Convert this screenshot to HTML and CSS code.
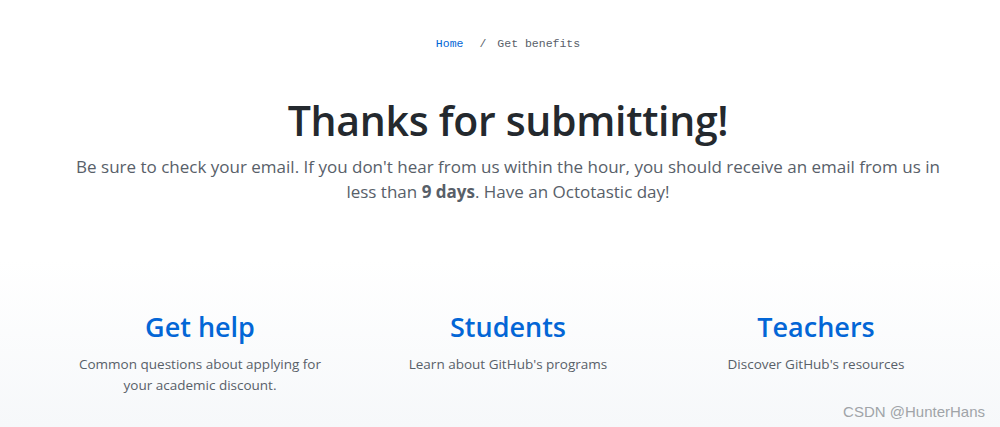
FILE: index.html
```html
<!DOCTYPE html>
<html lang="en">
<head>
<meta charset="utf-8">
<title>Thanks for submitting</title>
<link rel="stylesheet" href="styles.css">
</head>
<body>
<main class="page">
  <nav class="crumbs">
    <a class="crumb-link" href="#">Home</a>
    <span class="crumb-sep">/</span>
    <span class="crumb-current">Get benefits</span>
  </nav>
  <section class="hero">
    <h1 class="hero-title">Thanks for submitting!</h1>
    <p class="hero-text">Be sure to check your email. If you don't hear from us within the hour, you should receive an email from us in less than <strong>9 days</strong>. Have an Octotastic day!</p>
  </section>
  <section class="links">
    <div class="links-grid">
      <div class="link-col">
        <a class="link-title" href="#">Get help</a>
        <p class="link-text">Common questions about applying for your academic discount.</p>
      </div>
      <div class="link-col">
        <a class="link-title" href="#">Students</a>
        <p class="link-text">Learn about GitHub's programs</p>
      </div>
      <div class="link-col">
        <a class="link-title" href="#">Teachers</a>
        <p class="link-text">Discover GitHub's resources</p>
      </div>
    </div>
  </section>
</main>
<div class="watermark">CSDN @HunterHans</div>
</body>
</html>
```
FILE: styles.css
```css
* { box-sizing: border-box; }
html, body { margin: 0; padding: 0; }
body {
  background: #fff;
  font-family: "Open Sans", "Noto Sans", sans-serif;
  color: #24292e;
  height: 427px;
  overflow: hidden;
  position: relative;
}
.page {
  display: flex;
  flex-direction: column;
  min-height: 427px;
}
.crumbs {
  display: flex;
  justify-content: center;
  align-items: center;
  padding: 36px 0 0 16px;
  font-family: "Liberation Mono", "DejaVu Sans Mono", monospace;
  font-size: 11.5px;
  line-height: 16px;
}
.crumb-link { color: #0366d6; text-decoration: none; }
.crumb-sep { color: #586069; margin: 0 11px 0 16px; }
.crumb-current { color: #586069; }
.hero {
  text-align: center;
  padding: 40px 42px 0 58px;
}
.hero-title {
  margin: 0;
  font-size: 41px;
  font-weight: 600;
  line-height: 56px;
  color: #24292e;
  letter-spacing: -0.3px;
}
.hero-text {
  margin: 6px auto 0;
  max-width: 880px;
  font-size: 17px;
  line-height: 25px;
  color: #586069;
}
.hero-text strong { color: #586069; font-weight: 700; }
.links {
  flex: 1;
  margin-top: 56px;
  padding: 48px 0 0 16px;
  background: linear-gradient(#fff, #f6f8fa);
}
.links-grid {
  display: grid;
  grid-template-columns: repeat(3, 308px);
  justify-content: center;
}
.link-col {
  display: flex;
  flex-direction: column;
  align-items: center;
  text-align: center;
}
.link-title {
  color: #0366d6;
  text-decoration: none;
  font-size: 27px;
  font-weight: 600;
  line-height: 38px;
}
.link-text {
  margin: 8px 0 0;
  max-width: 260px;
  font-size: 13.5px;
  line-height: 21px;
  color: #586069;
}
.watermark {
  position: absolute;
  right: 15px;
  bottom: 7px;
  font-family: "Liberation Sans", Arial, sans-serif;
  font-size: 15px;
  color: #a0a4a8;
}
```
